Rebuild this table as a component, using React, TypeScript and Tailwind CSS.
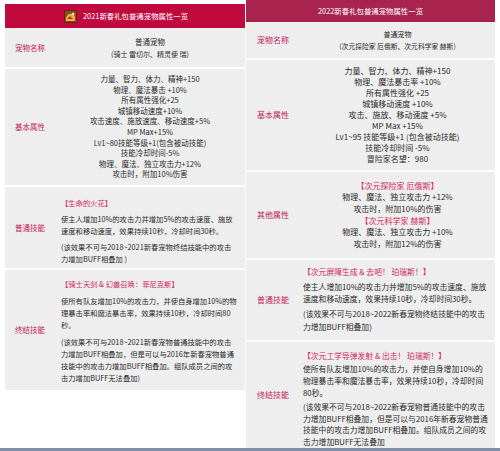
import type { ReactNode } from 'react'

const font = { fontFamily: '"Noto Sans CJK SC", "Noto Sans", sans-serif' }

function Row({
  label,
  h,
  labelW,
  labelSize,
  children,
}: {
  label: string
  h: string
  labelW: string
  labelSize: string
  children: ReactNode
}) {
  return (
    <div className={`flex bg-[#eeeeee] ${h}`}>
      <div className={`flex shrink-0 items-center justify-center text-[#c2185b] ${labelW} ${labelSize}`}>
        {label}
      </div>
      <div className="flex min-w-0 flex-1 flex-col justify-center">{children}</div>
    </div>
  )
}

function PetIcon() {
  return (
    <svg width="13" height="13" viewBox="0 0 13 13" className="mr-[6px] shrink-0">
      <rect width="13" height="13" rx="1" fill="#5a2a14" />
      <rect x="1" y="1" width="11" height="11" fill="#8a4a1c" />
      <path d="M2 8 Q4 3 7 4 Q10 3 11 7 L11 11 L2 11 Z" fill="#e8b040" />
      <path d="M3 9 L6 6 L9 9 Z" fill="#c0302a" />
      <circle cx="9" cy="4" r="1.3" fill="#f8e0a0" />
    </svg>
  )
}

function LeftTable() {
  return (
    <div className="flex w-[240px] flex-col gap-[2px] pt-[4px]">
      <div>
        <div className="flex h-[24px] items-center bg-[#c00a3f] pl-[59px] text-[7.4px] text-white">
          <PetIcon />
          2021新春礼包普通宠物属性一览
        </div>
        <Row label="宠物名称" h="h-[39px]" labelW="w-[50px]" labelSize="text-[7.5px]">
          <div className="text-center text-[7.5px] leading-[12px] text-[#2a2a2a]">普通宠物</div>
          <div className="text-center text-[7px] leading-[12px] text-[#2a2a2a]">(骑士 雷切尔、精灵使 瑞)</div>
        </Row>
      </div>
      <Row label="基本属性" h="h-[116px]" labelW="w-[50px]" labelSize="text-[7.5px]">
        <div className="text-center text-[7.5px] leading-[10.6px] text-[#2a2a2a]">
          <div>力量、智力、体力、精神+150</div>
          <div>物理、魔法暴击 +10%</div>
          <div>所有属性强化+25</div>
          <div>城镇移动速度+10%</div>
          <div>攻击速度、施放速度、移动速度+5%</div>
          <div>MP Max+15%</div>
          <div>Lv1~80技能等级+1(包含被动技能)</div>
          <div>技能冷却时间-5%</div>
          <div>物理、魔法、独立攻击力+12%</div>
          <div>攻击时，附加10%伤害</div>
        </div>
      </Row>
      <Row label="普通技能" h="h-[81px]" labelW="w-[50px]" labelSize="text-[7.5px]">
        <div className="flex flex-col gap-[4px] pl-[6px] pr-[8px] pt-[6px] text-[7.3px] leading-[12px] text-[#2a2a2a]">
          <div className="text-[#d0245a]">【生命的火花】</div>
          <div>使主人增加10%的攻击力并增加5%的攻击速度、施放速度和移动速度，效果持续10秒，冷却时间30秒。</div>
          <div>(该效果不可与2018~2021新春宠物终结技能中的攻击力增加BUFF相叠加 )</div>
        </div>
      </Row>
      <Row label="终结技能" h="h-[120px]" labelW="w-[50px]" labelSize="text-[7.5px]">
        <div className="flex flex-col gap-[4px] pl-[6px] pr-[8px] pt-[3px] text-[7.3px] leading-[12.3px] text-[#2a2a2a]">
          <div className="text-[#d0245a]">【骑士天剑 &amp; 幻兽召唤：菲尼克斯】</div>
          <div>使所有队友增加10%的攻击力，并使自身增加10%的物理暴击率和魔法暴击率，效果持续10秒，冷却时间80秒。</div>
          <div>
            (该效果不可与2018~2021新春宠物普通技能中的攻击力增加BUFF相叠加，但是可以与2016年新春宠物普通技能中的攻击力增加BUFF相叠加。组队成员之间的攻击力增加BUFF无法叠加)
          </div>
        </div>
      </Row>
    </div>
  )
}

function RightTable() {
  return (
    <div className="flex w-[249px] flex-col gap-[2px]">
      <div>
        <div className="flex h-[22px] items-center justify-center bg-[#a8244f] text-[7.4px] text-white">
          2022新春礼包普通宠物属性一览
        </div>
        <Row label="宠物名称" h="h-[36px]" labelW="w-[54px]" labelSize="text-[8px]">
          <div className="text-center text-[7px] leading-[12px] text-[#2a2a2a]">普通宠物</div>
          <div className="text-center text-[6.8px] leading-[12px] text-[#2a2a2a]">(次元探险家 厄俄斯、次元科学家 赫斯)</div>
        </Row>
      </div>
      <Row label="基本属性" h="h-[110px]" labelW="w-[54px]" labelSize="text-[8px]">
        <div className="text-center text-[8px] leading-[11px] text-[#2a2a2a]">
          <div>力量、智力、体力、精神+150</div>
          <div>物理、魔法暴击率 +10%</div>
          <div>所有属性强化 +25</div>
          <div>城镇移动速度 +10%</div>
          <div>攻击、施放、移动速度 +5%</div>
          <div>MP Max +15%</div>
          <div>Lv1~95 技能等级+1 (包含被动技能)</div>
          <div>技能冷却时间 -5%</div>
          <div>冒险家名望：980</div>
        </div>
      </Row>
      <Row label="其他属性" h="h-[86px]" labelW="w-[54px]" labelSize="text-[8px]">
        <div className="text-center text-[8px] leading-[11.7px] text-[#2a2a2a]">
          <div className="text-[#d0245a]">【次元探险家 厄俄斯】</div>
          <div>物理、魔法、独立攻击力 +12%</div>
          <div>攻击时，附加10%的伤害</div>
          <div className="text-[#d0245a]">【次元科学家 赫斯】</div>
          <div>物理、魔法、独立攻击力 +10%</div>
          <div>攻击时，附加12%的伤害</div>
        </div>
      </Row>
      <Row label="普通技能" h="h-[80px]" labelW="w-[54px]" labelSize="text-[8px]">
        <div className="flex flex-col gap-[2px] pl-[3px] pr-[4px] text-[7.8px] leading-[12.6px] text-[#2a2a2a]">
          <div className="text-[#d0245a]">【次元屏障生成 &amp; 去吧！ 珀瑞斯！】</div>
          <div>使主人增加10%的攻击力并增加5%的攻击速度、施放速度和移动速度，效果持续10秒，冷却时间30秒。</div>
          <div>(该效果不可与2018~2022新春宠物终结技能中的攻击力增加BUFF相叠加)</div>
        </div>
      </Row>
      <div className="flex-1">
        <Row label="终结技能" h="h-full" labelW="w-[54px]" labelSize="text-[8px]">
          <div className="flex flex-col gap-[2px] pl-[3px] pr-[7px] pt-[8px] text-[7.8px] leading-[11.8px] text-[#2a2a2a]">
            <div className="text-[#d0245a]">【次元工学导弹发射 &amp; 出击！ 珀瑞斯！】</div>
            <div>使所有队友增加10%的攻击力，并使自身增加10%的物理暴击率和魔法暴击率，效果持续10秒，冷却时间80秒。</div>
            <div>
              (该效果不可与2018~2022新春宠物普通技能中的攻击力增加BUFF相叠加，但是可以与2016年新春宠物普通技能中的攻击力增加BUFF相叠加。组队成员之间的攻击力增加BUFF无法叠加
            </div>
          </div>
        </Row>
      </div>
    </div>
  )
}

export default function App() {
  return (
    <div className="flex h-[451px] w-[500px] flex-col overflow-hidden bg-white" style={font}>
      <div className="flex min-h-0 flex-1 gap-px pl-[5px]">
        <LeftTable />
        <RightTable />
      </div>
      <div className="h-[3px] bg-[#8190a8]" />
    </div>
  )
}
